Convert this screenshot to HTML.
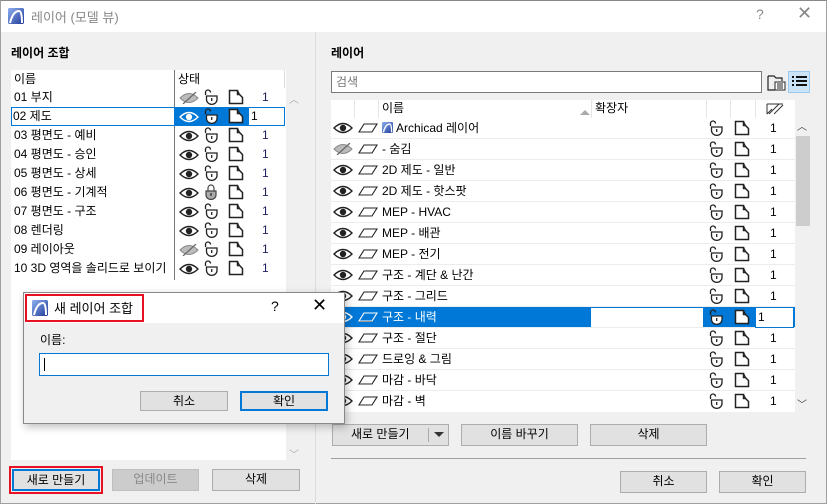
<!DOCTYPE html>
<html><head><meta charset="utf-8">
<style>
*{box-sizing:border-box;margin:0;padding:0}
body{width:827px;height:504px;overflow:hidden;background:#f0f0f0;font-family:"Liberation Sans","Noto Sans CJK KR",sans-serif;font-size:12px;color:#000;position:relative}
.a{position:absolute}
.win{left:0;top:0;width:827px;height:504px;border:1px solid #a0a0a0;border-top:1px solid #888}
.tb{left:1px;top:1px;width:825px;height:31px;background:#fff}
.lbl{font-weight:bold;font-size:12px}
.btn{position:absolute;height:21px;background:#e1e1e1;border:1px solid #adadad;text-align:center;line-height:19px;font-size:12px}
.row{position:absolute;height:19px;line-height:19px;white-space:nowrap}
.rr{position:absolute;left:331px;width:464px;height:21px;line-height:20px;background:#fff;border-bottom:1px solid #ececec;white-space:nowrap}
svg.i{position:absolute;color:#222}
svg.w{color:#fff}
</style></head><body>
<svg width="0" height="0" style="position:absolute">
<defs>
<symbol id="eye" viewBox="0 0 20 12"><path d="M1 6Q10 -3 19 6Q10 15 1 6Z" fill="none" stroke="currentColor" stroke-width="1.4"/><circle cx="10" cy="6" r="3.2" fill="currentColor"/></symbol>
<symbol id="eyex" viewBox="0 0 20 12"><path d="M1 6Q10 -3 19 6Q10 15 1 6Z" fill="#bbb" stroke="#888" stroke-width="1"/><path d="M4 12L17 0" stroke="#666" stroke-width="1.2"/></symbol>
<symbol id="lock" viewBox="0 0 14 16"><path d="M1.5 6V3.5A2.5 2.5 0 0 1 6.5 3.5" fill="none" stroke="#222" stroke-width="1.3"/><path d="M2.5 7H13V10.5A5.2 4.8 0 0 1 2.5 10.5Z" fill="#fff" stroke="#222" stroke-width="1.3"/><path d="M7.7 9V12" stroke="#222" stroke-width="1.3"/></symbol>
<symbol id="lockc" viewBox="0 0 14 16"><path d="M4 7V4A3 3 0 0 1 10 4V7" fill="none" stroke="#444" stroke-width="1.2"/><path d="M2 7H12V11A5 4.5 0 0 1 2 11Z" fill="#aaa" stroke="#444" stroke-width="1.2"/><path d="M7 9V12" stroke="#222" stroke-width="1.2"/></symbol>
<symbol id="fold" viewBox="0 0 16 16"><path d="M1.5 1.5H9.5V5.5H11.5L14.5 8.5V14.5H1.5Z" fill="#fff" stroke="#222" stroke-width="1.5"/><path d="M9.5 1.5L11.5 5.5" stroke="#222" stroke-width="1.3"/></symbol>
<symbol id="lay" viewBox="0 0 20 12"><path d="M6 2H19L14 10H1Z" fill="none" stroke="currentColor" stroke-width="1.1"/><path d="M1 10.5H14" stroke="#999"/></symbol>
<symbol id="logo" viewBox="0 0 16 16"><rect width="16" height="16" rx="2" fill="#3a5fc8"/><rect width="16" height="16" rx="2" fill="url(#lg)"/><path d="M2 15Q5 3 11 3Q14 3 14 15" fill="none" stroke="#fff" stroke-width="2"/></symbol>
<linearGradient id="lg" x1="0" y1="0" x2="1" y2="1"><stop offset="0" stop-color="#8fb0f0"/><stop offset="1" stop-color="#1f3a9a"/></linearGradient>
</defs></svg>

<div class="a win"></div>
<div class="a tb"></div>
<svg class="i" style="left:8px;top:8px" width="16" height="16"><use href="#logo"/></svg>
<div class="a" style="left:31px;top:7px;font-size:13px;color:#888">레이어 (모델 뷰)</div>
<div class="a" style="left:756px;top:6px;font-size:14px;color:#888">?</div>
<div class="a" style="left:797px;top:3px;font-size:18px;color:#888">✕</div>

<div class="a lbl" style="left:11px;top:44px">레이어 조합</div>
<div class="a lbl" style="left:331px;top:44px">레이어</div>

<div class="a" style="left:11px;top:70px;width:275px;height:390px;background:#fff"></div>
<div class="a" style="left:286px;top:88px;width:14px;height:372px;background:#f0f0f0"></div>
<div class="a" style="left:289px;top:91px;font-size:10px;color:#aaa">︿</div>
<div class="a" style="left:289px;top:446px;font-size:10px;color:#aaa">﹀</div>
<div class="a" style="left:174px;top:70px;width:1px;height:210px;background:#777"></div>
<div class="a" style="left:284px;top:70px;width:1px;height:18px;background:#ddd"></div>
<div class="row" style="left:14px;top:70px">이름</div>
<div class="row" style="left:178px;top:70px">상태</div>

<div class="row" style="left:14px;top:88px">01 부지</div>
<div class="a" style="left:11px;top:107px;width:164px;height:19px;border:1px solid #0078d7;background:#fff"></div>
<div class="row" style="left:13px;top:107px">02 제도</div>
<div class="a" style="left:175px;top:107px;width:73px;height:19px;background:#0078d7"></div>
<div class="a" style="left:248px;top:107px;width:37px;height:19px;border:1px solid #0078d7;background:#fff"></div>
<div class="row" style="left:251px;top:107px">1</div>
<div class="row" style="left:14px;top:126px">03 평면도 - 예비</div>
<div class="row" style="left:14px;top:145px">04 평면도 - 승인</div>
<div class="row" style="left:14px;top:164px">05 평면도 - 상세</div>
<div class="row" style="left:14px;top:183px">06 평면도 - 기계적</div>
<div class="row" style="left:14px;top:202px">07 평면도 - 구조</div>
<div class="row" style="left:14px;top:221px">08 렌더링</div>
<div class="row" style="left:14px;top:240px">09 레이아웃</div>
<div class="row" style="left:14px;top:259px">10 3D 영역을 솔리드로 보이기</div>

<svg class="i" style="left:179px;top:92px" width="20" height="12"><use href="#eyex"/></svg>
<svg class="i w" style="left:179px;top:111px" width="20" height="12"><use href="#eye"/></svg>
<svg class="i" style="left:179px;top:130px" width="20" height="12"><use href="#eye"/></svg>
<svg class="i" style="left:179px;top:149px" width="20" height="12"><use href="#eye"/></svg>
<svg class="i" style="left:179px;top:168px" width="20" height="12"><use href="#eye"/></svg>
<svg class="i" style="left:179px;top:187px" width="20" height="12"><use href="#eye"/></svg>
<svg class="i" style="left:179px;top:206px" width="20" height="12"><use href="#eye"/></svg>
<svg class="i" style="left:179px;top:225px" width="20" height="12"><use href="#eye"/></svg>
<svg class="i" style="left:179px;top:244px" width="20" height="12"><use href="#eyex"/></svg>
<svg class="i" style="left:179px;top:263px" width="20" height="12"><use href="#eye"/></svg>
<svg class="i" style="left:204px;top:89px" width="14" height="16"><use href="#lock"/></svg>
<svg class="i" style="left:204px;top:108px" width="14" height="16"><use href="#lock"/></svg>
<svg class="i" style="left:204px;top:127px" width="14" height="16"><use href="#lock"/></svg>
<svg class="i" style="left:204px;top:146px" width="14" height="16"><use href="#lock"/></svg>
<svg class="i" style="left:204px;top:165px" width="14" height="16"><use href="#lock"/></svg>
<svg class="i" style="left:204px;top:184px" width="14" height="16"><use href="#lockc"/></svg>
<svg class="i" style="left:204px;top:203px" width="14" height="16"><use href="#lock"/></svg>
<svg class="i" style="left:204px;top:222px" width="14" height="16"><use href="#lock"/></svg>
<svg class="i" style="left:204px;top:241px" width="14" height="16"><use href="#lock"/></svg>
<svg class="i" style="left:204px;top:260px" width="14" height="16"><use href="#lock"/></svg>
<svg class="i" style="left:228px;top:89px" width="16" height="16"><use href="#fold"/></svg>
<svg class="i" style="left:228px;top:108px" width="16" height="16"><use href="#fold"/></svg>
<svg class="i" style="left:228px;top:127px" width="16" height="16"><use href="#fold"/></svg>
<svg class="i" style="left:228px;top:146px" width="16" height="16"><use href="#fold"/></svg>
<svg class="i" style="left:228px;top:165px" width="16" height="16"><use href="#fold"/></svg>
<svg class="i" style="left:228px;top:184px" width="16" height="16"><use href="#fold"/></svg>
<svg class="i" style="left:228px;top:203px" width="16" height="16"><use href="#fold"/></svg>
<svg class="i" style="left:228px;top:222px" width="16" height="16"><use href="#fold"/></svg>
<svg class="i" style="left:228px;top:241px" width="16" height="16"><use href="#fold"/></svg>
<svg class="i" style="left:228px;top:260px" width="16" height="16"><use href="#fold"/></svg>
<div class="row" style="left:262px;top:88px;color:#202060">1</div>
<div class="row" style="left:262px;top:126px;color:#202060">1</div>
<div class="row" style="left:262px;top:145px;color:#202060">1</div>
<div class="row" style="left:262px;top:164px;color:#202060">1</div>
<div class="row" style="left:262px;top:183px;color:#202060">1</div>
<div class="row" style="left:262px;top:202px;color:#202060">1</div>
<div class="row" style="left:262px;top:221px;color:#202060">1</div>
<div class="row" style="left:262px;top:240px;color:#202060">1</div>
<div class="row" style="left:262px;top:259px;color:#202060">1</div>

<div class="a" style="left:315px;top:32px;width:1px;height:472px;background:#dcdcdc"></div>

<div class="a" style="left:9px;top:466px;width:94px;height:28px;border:2px solid #e81123"></div>
<div class="btn" style="left:12px;top:469px;width:88px;height:22px;border:2px solid #0078d7;line-height:18px">새로 만들기</div>
<div class="btn" style="left:112px;top:469px;width:87px;height:22px;background:#ccc;border-color:#bfbfbf;color:#888">업데이트</div>
<div class="btn" style="left:212px;top:469px;width:88px;height:22px">삭제</div>

<div class="a" style="left:331px;top:71px;width:431px;height:22px;background:#fff;border:1px solid #7a7a7a;color:#777;line-height:20px;padding-left:4px">검색</div>
<svg class="i" style="left:767px;top:74px" width="20" height="18" viewBox="0 0 20 18"><path d="M1 2H7L9 4H15V7" fill="none" stroke="#222" stroke-width="1.2"/><path d="M1 2V16H8" fill="none" stroke="#222" stroke-width="1.2"/><rect x="8" y="8" width="10" height="8" fill="#fff" stroke="#222"/><path d="M10 10H16M10 12H16M10 14H16" stroke="#222"/></svg>
<div class="a" style="left:788px;top:71px;width:22px;height:22px;background:#cce4f7;border:1px solid #99c9ef"></div>
<svg class="i" style="left:791px;top:75px" width="17" height="14" viewBox="0 0 17 14"><path d="M1 2h2M5 2h11M1 6h2M5 6h11M1 10h2M5 10h11" stroke="#111" stroke-width="2"/></svg>

<div class="a" style="left:331px;top:100px;width:464px;height:19px;background:#fff"></div>
<div class="a" style="left:354px;top:100px;width:1px;height:19px;background:#e5e5e5"></div>
<div class="a" style="left:378px;top:100px;width:1px;height:19px;background:#e5e5e5"></div>
<div class="a" style="left:591px;top:100px;width:1px;height:19px;background:#e5e5e5"></div>
<div class="a" style="left:706px;top:100px;width:1px;height:19px;background:#e5e5e5"></div>
<div class="a" style="left:730px;top:100px;width:1px;height:19px;background:#e5e5e5"></div>
<div class="a" style="left:755px;top:100px;width:1px;height:19px;background:#e5e5e5"></div>
<div class="row" style="left:382px;top:99px">이름</div>
<div class="a" style="left:580px;top:110px;width:0;height:0;border-left:5px solid transparent;border-right:5px solid transparent;border-bottom:5px solid #aaa"></div>
<div class="row" style="left:595px;top:99px">확장자</div>
<svg class="i" style="left:766px;top:103px" width="18" height="12" viewBox="0 0 18 12"><path d="M1 1H17M1 1V11M1 11L6 6M3 11L13 1M8 11L17 2" stroke="#333" fill="none"/></svg>

<div class="rr" style="top:118px"></div>
<div class="rr" style="top:139px"></div>
<div class="rr" style="top:160px"></div>
<div class="rr" style="top:181px"></div>
<div class="rr" style="top:202px"></div>
<div class="rr" style="top:223px"></div>
<div class="rr" style="top:244px"></div>
<div class="rr" style="top:265px"></div>
<div class="rr" style="top:286px"></div>
<div class="rr" style="top:307px;background:#0078d7"></div>
<div class="rr" style="top:328px"></div>
<div class="rr" style="top:349px"></div>
<div class="rr" style="top:370px"></div>
<div class="rr" style="top:391px;border:none"></div>
<div class="a" style="left:591px;top:308px;width:112px;height:19px;background:#fff"></div>
<div class="a" style="left:755px;top:307px;width:39px;height:21px;background:#fff;border:1px solid #0078d7"></div>

<div class="a" style="left:795px;top:119px;width:15px;height:293px;background:#f0f0f0"></div>
<div class="a" style="left:796px;top:136px;width:14px;height:90px;background:#cdcdcd"></div>
<div class="a" style="left:797px;top:118px;font-size:10px;color:#444">︿</div>
<div class="a" style="left:797px;top:396px;font-size:10px;color:#444">﹀</div>

<svg class="i" style="left:333px;top:122px" width="20" height="12"><use href="#eye"/></svg>
<svg class="i" style="left:333px;top:143px" width="20" height="12"><use href="#eyex"/></svg>
<svg class="i" style="left:333px;top:164px" width="20" height="12"><use href="#eye"/></svg>
<svg class="i" style="left:333px;top:185px" width="20" height="12"><use href="#eye"/></svg>
<svg class="i" style="left:333px;top:206px" width="20" height="12"><use href="#eye"/></svg>
<svg class="i" style="left:333px;top:227px" width="20" height="12"><use href="#eye"/></svg>
<svg class="i" style="left:333px;top:248px" width="20" height="12"><use href="#eye"/></svg>
<svg class="i" style="left:333px;top:269px" width="20" height="12"><use href="#eye"/></svg>
<svg class="i" style="left:333px;top:290px" width="20" height="12"><use href="#eye"/></svg>
<svg class="i w" style="left:333px;top:311px" width="20" height="12"><use href="#eye"/></svg>
<svg class="i" style="left:333px;top:332px" width="20" height="12"><use href="#eye"/></svg>
<svg class="i" style="left:333px;top:353px" width="20" height="12"><use href="#eye"/></svg>
<svg class="i" style="left:333px;top:374px" width="20" height="12"><use href="#eye"/></svg>
<svg class="i" style="left:333px;top:395px" width="20" height="12"><use href="#eye"/></svg>

<svg class="i" style="left:358px;top:122px" width="20" height="12"><use href="#lay"/></svg>
<svg class="i" style="left:358px;top:143px" width="20" height="12"><use href="#lay"/></svg>
<svg class="i" style="left:358px;top:164px" width="20" height="12"><use href="#lay"/></svg>
<svg class="i" style="left:358px;top:185px" width="20" height="12"><use href="#lay"/></svg>
<svg class="i" style="left:358px;top:206px" width="20" height="12"><use href="#lay"/></svg>
<svg class="i" style="left:358px;top:227px" width="20" height="12"><use href="#lay"/></svg>
<svg class="i" style="left:358px;top:248px" width="20" height="12"><use href="#lay"/></svg>
<svg class="i" style="left:358px;top:269px" width="20" height="12"><use href="#lay"/></svg>
<svg class="i" style="left:358px;top:290px" width="20" height="12"><use href="#lay"/></svg>
<svg class="i w" style="left:358px;top:311px" width="20" height="12"><use href="#lay"/></svg>
<svg class="i" style="left:358px;top:332px" width="20" height="12"><use href="#lay"/></svg>
<svg class="i" style="left:358px;top:353px" width="20" height="12"><use href="#lay"/></svg>
<svg class="i" style="left:358px;top:374px" width="20" height="12"><use href="#lay"/></svg>
<svg class="i" style="left:358px;top:395px" width="20" height="12"><use href="#lay"/></svg>

<svg class="i" style="left:382px;top:122px" width="11" height="11"><use href="#logo"/></svg>
<div class="row" style="left:396px;top:119px">Archicad 레이어</div>
<div class="row" style="left:382px;top:140px">- 숨김</div>
<div class="row" style="left:382px;top:161px">2D 제도 - 일반</div>
<div class="row" style="left:382px;top:182px">2D 제도 - 핫스팟</div>
<div class="row" style="left:382px;top:203px">MEP - HVAC</div>
<div class="row" style="left:382px;top:224px">MEP - 배관</div>
<div class="row" style="left:382px;top:245px">MEP - 전기</div>
<div class="row" style="left:382px;top:266px">구조 - 계단 &amp; 난간</div>
<div class="row" style="left:382px;top:287px">구조 - 그리드</div>
<div class="row" style="left:382px;top:308px;color:#fff">구조 - 내력</div>
<div class="row" style="left:382px;top:329px">구조 - 절단</div>
<div class="row" style="left:382px;top:350px">드로잉 &amp; 그림</div>
<div class="row" style="left:382px;top:371px">마감 - 바닥</div>
<div class="row" style="left:382px;top:392px">마감 - 벽</div>

<svg class="i" style="left:709px;top:120px" width="14" height="16"><use href="#lock"/></svg>
<svg class="i" style="left:709px;top:141px" width="14" height="16"><use href="#lock"/></svg>
<svg class="i" style="left:709px;top:162px" width="14" height="16"><use href="#lock"/></svg>
<svg class="i" style="left:709px;top:183px" width="14" height="16"><use href="#lock"/></svg>
<svg class="i" style="left:709px;top:204px" width="14" height="16"><use href="#lock"/></svg>
<svg class="i" style="left:709px;top:225px" width="14" height="16"><use href="#lock"/></svg>
<svg class="i" style="left:709px;top:246px" width="14" height="16"><use href="#lock"/></svg>
<svg class="i" style="left:709px;top:267px" width="14" height="16"><use href="#lock"/></svg>
<svg class="i" style="left:709px;top:288px" width="14" height="16"><use href="#lock"/></svg>
<svg class="i" style="left:709px;top:309px" width="14" height="16"><use href="#lock"/></svg>
<svg class="i" style="left:709px;top:330px" width="14" height="16"><use href="#lock"/></svg>
<svg class="i" style="left:709px;top:351px" width="14" height="16"><use href="#lock"/></svg>
<svg class="i" style="left:709px;top:372px" width="14" height="16"><use href="#lock"/></svg>
<svg class="i" style="left:709px;top:393px" width="14" height="16"><use href="#lock"/></svg>

<svg class="i" style="left:734px;top:120px" width="16" height="16"><use href="#fold"/></svg>
<svg class="i" style="left:734px;top:141px" width="16" height="16"><use href="#fold"/></svg>
<svg class="i" style="left:734px;top:162px" width="16" height="16"><use href="#fold"/></svg>
<svg class="i" style="left:734px;top:183px" width="16" height="16"><use href="#fold"/></svg>
<svg class="i" style="left:734px;top:204px" width="16" height="16"><use href="#fold"/></svg>
<svg class="i" style="left:734px;top:225px" width="16" height="16"><use href="#fold"/></svg>
<svg class="i" style="left:734px;top:246px" width="16" height="16"><use href="#fold"/></svg>
<svg class="i" style="left:734px;top:267px" width="16" height="16"><use href="#fold"/></svg>
<svg class="i" style="left:734px;top:288px" width="16" height="16"><use href="#fold"/></svg>
<svg class="i" style="left:734px;top:309px" width="16" height="16"><use href="#fold"/></svg>
<svg class="i" style="left:734px;top:330px" width="16" height="16"><use href="#fold"/></svg>
<svg class="i" style="left:734px;top:351px" width="16" height="16"><use href="#fold"/></svg>
<svg class="i" style="left:734px;top:372px" width="16" height="16"><use href="#fold"/></svg>
<svg class="i" style="left:734px;top:393px" width="16" height="16"><use href="#fold"/></svg>

<div class="row" style="left:770px;top:119px">1</div>
<div class="row" style="left:770px;top:140px">1</div>
<div class="row" style="left:770px;top:161px">1</div>
<div class="row" style="left:770px;top:182px">1</div>
<div class="row" style="left:770px;top:203px">1</div>
<div class="row" style="left:770px;top:224px">1</div>
<div class="row" style="left:770px;top:245px">1</div>
<div class="row" style="left:770px;top:266px">1</div>
<div class="row" style="left:770px;top:287px">1</div>
<div class="row" style="left:758px;top:308px">1</div>
<div class="row" style="left:770px;top:329px">1</div>
<div class="row" style="left:770px;top:350px">1</div>
<div class="row" style="left:770px;top:371px">1</div>
<div class="row" style="left:770px;top:392px">1</div>

<div class="btn" style="left:332px;top:424px;width:117px;height:22px;text-align:left;padding-left:18px">새로 만들기</div>
<div class="a" style="left:428px;top:428px;width:1px;height:14px;background:#aaa"></div>
<div class="a" style="left:434px;top:432px;width:0;height:0;border-left:5px solid transparent;border-right:5px solid transparent;border-top:5px solid #333"></div>
<div class="btn" style="left:461px;top:424px;width:117px;height:22px">이름 바꾸기</div>
<div class="btn" style="left:590px;top:424px;width:117px;height:22px">삭제</div>
<div class="a" style="left:331px;top:458px;width:475px;height:1px;background:#a0a0a0"></div>
<div class="btn" style="left:620px;top:471px;width:87px;height:22px">취소</div>
<div class="btn" style="left:719px;top:471px;width:87px;height:22px">확인</div>

<div class="a" style="left:23px;top:292px;width:322px;height:132px;background:#f0f0f0;border:1px solid #888;box-shadow:2px 3px 8px rgba(0,0,0,.25)"></div>
<div class="a" style="left:24px;top:293px;width:320px;height:30px;background:#fff"></div>
<div class="a" style="left:25px;top:294px;width:119px;height:28px;border:2px solid #e81123"></div>
<svg class="i" style="left:32px;top:300px" width="16" height="16"><use href="#logo"/></svg>
<div class="a" style="left:54px;top:298px;font-size:13px">새 레이어 조합</div>
<div class="a" style="left:271px;top:298px;font-size:14px">?</div>
<div class="a" style="left:312px;top:295px;font-size:18px">✕</div>
<div class="a" style="left:40px;top:331px">이름:</div>
<div class="a" style="left:39px;top:353px;width:290px;height:23px;background:#fff;border:1px solid #0078d7"></div>
<div class="a" style="left:44px;top:358px;width:1px;height:13px;background:#000"></div>
<div class="btn" style="left:140px;top:391px;width:88px;height:20px;line-height:18px">취소</div>
<div class="btn" style="left:240px;top:391px;width:88px;height:20px;border:2px solid #0078d7;line-height:16px">확인</div>
</body></html>
